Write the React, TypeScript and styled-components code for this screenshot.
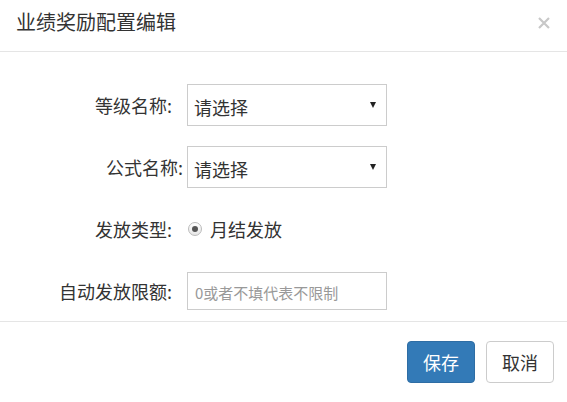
import React from "react";
import styled, { createGlobalStyle } from "styled-components";

const Global = createGlobalStyle`
  html, body { margin: 0; padding: 0; background: #fff; }
  body { font-family: "Noto Sans CJK SC", "Noto Sans", sans-serif; color: #333; }
  * { box-sizing: border-box; }
`;

const Modal = styled.div`
  width: 567px;
  height: 402px;
  display: flex;
  flex-direction: column;
  background: #fff;
  overflow: hidden;
`;

const Header = styled.div`
  height: 52px;
  flex: none;
  display: flex;
  align-items: center;
  justify-content: space-between;
  padding: 0 17px 0 16px;
  border-bottom: 1px solid #e5e5e5;
`;

const Title = styled.h4`
  margin: 0;
  font-size: 20px;
  font-weight: 400;
  color: #333;
  line-height: 1;
  position: relative;
  top: -4px;
`;

const Close = styled.button`
  border: 0;
  background: none;
  padding: 0;
  width: 12px;
  height: 12px;
  display: flex;
  cursor: pointer;
  position: relative;
  top: -3px;
`;

const Body = styled.div`
  flex: 1;
  padding: 32px 0 0 0;
  display: flex;
  flex-direction: column;
  gap: 20px;
`;

const Row = styled.div`
  height: 42px;
  display: grid;
  grid-template-columns: 187px 200px;
  align-items: center;
`;

const Label = styled.label<{ $tight?: boolean }>`
  justify-self: end;
  padding-right: ${(p) => (p.$tight ? "4px" : "15px")};
  font-size: 18px;
  color: #333;
  white-space: nowrap;
`;

const Select = styled.div`
  height: 42px;
  border: 1px solid #ccc;
  display: flex;
  align-items: center;
  justify-content: space-between;
  padding: 4px 10px 0 6px;
  font-size: 18px;
  color: #333;
`;

const Caret = styled.span`
  width: 0;
  height: 0;
  border-left: 3px solid transparent;
  border-right: 3px solid transparent;
  border-top: 6px solid #222;
  margin-top: -4px;
`;

const RadioWrap = styled.label`
  display: flex;
  align-items: center;
  gap: 8px;
  font-size: 18px;
  color: #333;
  padding-left: 1px;
`;

const RadioDot = styled.span`
  width: 14px;
  height: 14px;
  border-radius: 50%;
  border: 1px solid #bbb;
  background: linear-gradient(#fff, #e6e6e6);
  display: flex;
  align-items: center;
  justify-content: center;
  &::after {
    content: "";
    width: 6px;
    height: 6px;
    border-radius: 50%;
    background: #555;
  }
`;

const Input = styled.input`
  height: 38px;
  width: 200px;
  border: 1px solid #ccc;
  padding: 2px 7px 0;
  font-family: inherit;
  font-size: 15px;
  color: #333;
  outline: none;
  &::placeholder { color: #999; }
`;

const Footer = styled.div`
  height: 81px;
  flex: none;
  border-top: 1px solid #e5e5e5;
  display: flex;
  justify-content: flex-end;
  align-items: flex-start;
  gap: 11px;
  padding: 19px 13px 0 0;
`;

const Button = styled.button<{ $primary?: boolean }>`
  width: 68px;
  height: 42px;
  border-radius: 4px;
  font-family: inherit;
  font-size: 18px;
  padding: 0;
  cursor: pointer;
  border: 1px solid ${(p) => (p.$primary ? "#2e6da4" : "#ccc")};
  background: ${(p) => (p.$primary ? "#337ab7" : "#fff")};
  color: ${(p) => (p.$primary ? "#fff" : "#333")};
`;

export default function App() {
  return (
    <>
      <Global />
      <Modal>
        <Header>
          <Title>业绩奖励配置编辑</Title>
          <Close aria-label="关闭">
            <svg width="12" height="12" viewBox="0 0 12 12">
              <path d="M1 1 L11 11 M11 1 L1 11" stroke="#c8c8c8" strokeWidth="2.2" />
            </svg>
          </Close>
        </Header>
        <Body>
          <Row>
            <Label>等级名称:</Label>
            <Select>
              请选择
              <Caret />
            </Select>
          </Row>
          <Row>
            <Label $tight>公式名称:</Label>
            <Select>
              请选择
              <Caret />
            </Select>
          </Row>
          <Row>
            <Label>发放类型:</Label>
            <RadioWrap>
              <RadioDot />
              月结发放
            </RadioWrap>
          </Row>
          <Row>
            <Label>自动发放限额:</Label>
            <Input placeholder="0或者不填代表不限制" />
          </Row>
        </Body>
        <Footer>
          <Button $primary>保存</Button>
          <Button>取消</Button>
        </Footer>
      </Modal>
    </>
  );
}
